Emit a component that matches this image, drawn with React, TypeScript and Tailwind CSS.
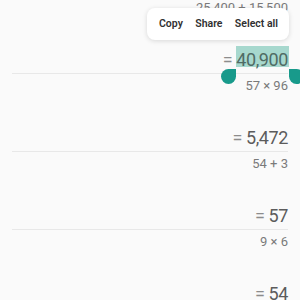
import React from "react";

const entries = [
  { expr: "25,400 + 15,500", result: "40,900", selected: true },
  { expr: "57 × 96", result: "5,472" },
  { expr: "54 + 3", result: "57" },
  { expr: "9 × 6", result: "54" },
];

export default function App() {
  return (
    <div
      className="relative h-[300px] w-[300px] overflow-hidden bg-[#fafafa]"
      style={{ fontFamily: "Roboto, 'Noto Sans', sans-serif" }}
    >
      <div className="flex flex-col px-3">
        {entries.map((e, i) => (
          <div key={i} className={i === 0 ? "flex flex-col" : "mt-[4px] flex flex-col"}>
            <div className="h-4 text-right text-[13px] leading-4 text-[#7a7a7a]">{e.expr}</div>
            <div className="mt-[34px] h-5 text-right text-[18px] leading-5 tracking-[-0.4px] text-[#5c5c5c]">
              <span className="mr-[4px] text-[#8c8c8c]">=</span>
              {e.selected ? (
                <span className="relative">
                  <span className="absolute left-0 right-[-1px] top-[-3px] bottom-[3px] bg-[#a7d8ce]" />
                  <span className="relative text-[#4f6b64]">{e.result}</span>
                  <span className="absolute left-[-15px] top-[20px] h-[15px] w-[15px] rounded-full rounded-tr-none bg-[#189a8b]" />
                  <span className="absolute left-[calc(100%+1px)] top-[20px] h-[15px] w-[15px] rounded-full rounded-tl-none bg-[#189a8b]" />
                </span>
              ) : (
                <span>{e.result}</span>
              )}
            </div>
            <div className="mt-[3px] h-px bg-[#e8e8e8]" />
          </div>
        ))}
      </div>

      <div className="absolute left-[147px] top-[8px] flex h-[32px] w-[142px] items-center justify-between whitespace-nowrap rounded-lg bg-white pl-3 pr-[11px] text-[10.5px] font-semibold text-[#303030] shadow-[0_1px_5px_rgba(0,0,0,0.14)]">
        <span>Copy</span>
        <span>Share</span>
        <span>Select all</span>
      </div>
    </div>
  );
}
